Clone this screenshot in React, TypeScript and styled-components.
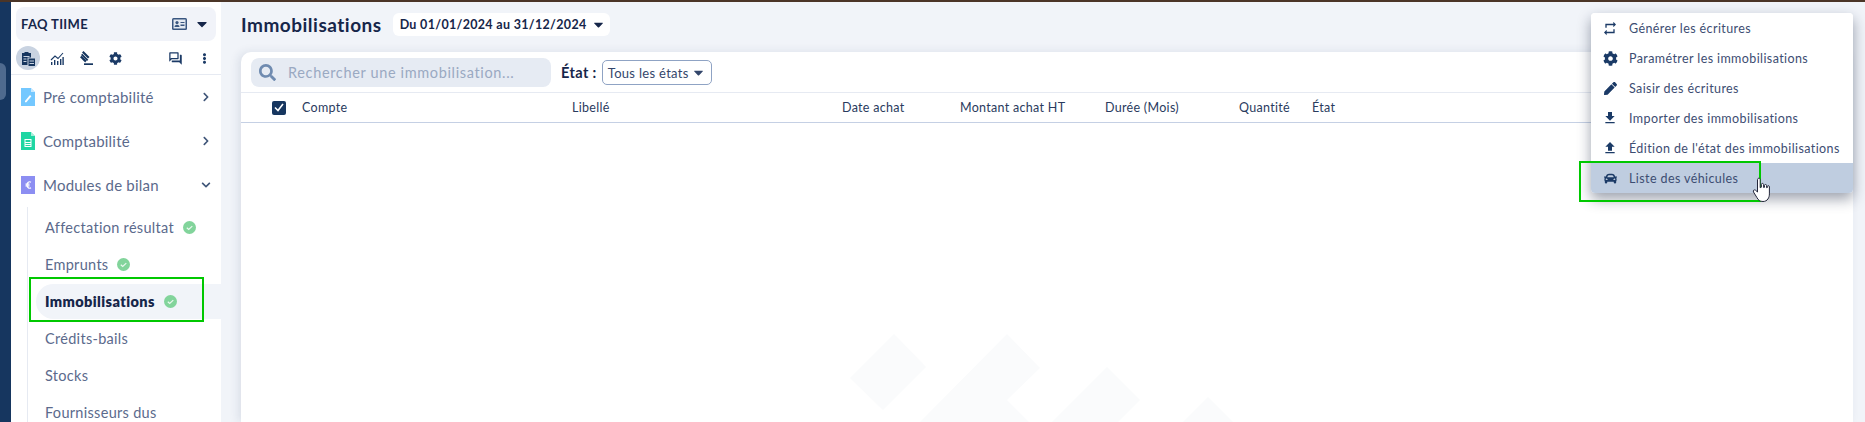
import styled, { createGlobalStyle } from "styled-components";
import { ReactNode } from "react";
import {
  FaCar,
  FaCaretDown,
  FaChevronDown,
  FaChevronRight,
  FaCog,
  FaEllipsisV,
  FaPen,
  FaSearch,
} from "react-icons/fa";
import { MdFileDownload, MdFileUpload, MdOutlineForum, MdRepeat } from "react-icons/md";

const FONT = `"Lato", "Open Sans", "Noto Sans", sans-serif`;

const GlobalStyle = createGlobalStyle`
  html, body { margin: 0; height: 100%; overflow: hidden; background: #f1f4f9; }
  #root { height: 100%; }
  * { box-sizing: border-box; }
  body { font-family: ${FONT}; color: #16264a; }
`;

const Page = styled.div`
  position: relative;
  height: 422px;
  display: flex;
  flex-direction: column;
  overflow: hidden;
`;

const TopBar = styled.div`
  height: 2px;
  flex: none;
  background: #4b3527;
`;

const Body = styled.div`
  flex: 1;
  min-height: 0;
  display: grid;
  grid-template-columns: 11px 210px 1fr;
`;

const Rail = styled.div`
  background: #16365f;
  padding-top: 61px;
`;

const RailTab = styled.div`
  width: 6px;
  height: 37px;
  border-radius: 0 6px 6px 0;
  background: #4f6a8e;
`;

const Sidebar = styled.aside`
  background: #fff;
  overflow: hidden;
  padding-top: 5px;
`;

const Account = styled.div`
  margin: 0 5px;
  height: 34px;
  border-radius: 8px;
  background: #f1f3f9;
  display: flex;
  align-items: center;
  padding: 0 6px 0 5px;
  font-size: 13px;
  font-weight: 700;
  letter-spacing: 0.35px;
  color: #16264a;
`;

const AccountName = styled.span`
  flex: 1;
`;

const CaretBox = styled.span`
  display: inline-flex;
  margin-left: 7px;
  font-size: 16px;
  color: #16264a;
`;

const ToolRow = styled.div`
  height: 29px;
  margin-top: 5px;
  padding: 0 5px;
  display: flex;
  align-items: flex-start;
  border-bottom: 1px solid #e6eaf2;
  color: #1b3a66;
`;

const ToolButton = styled.span<{ $active?: boolean }>`
  width: 24px;
  height: 24px;
  margin-right: 5px;
  border-radius: 50%;
  display: flex;
  align-items: center;
  justify-content: center;
  font-size: 13px;
  background: ${({ $active }) => ($active ? "#c9d3e1" : "transparent")};
  &:last-child {
    margin-right: 0;
  }
`;

const ToolSpacer = styled.span`
  flex: 1;
`;

const NavHead = styled.div`
  height: 44px;
  padding: 0 10px;
  display: flex;
  align-items: center;
  gap: 8px;
  font-size: 15px;
  letter-spacing: 0.22px;
  color: #5b6a8c;
`;

const NavLabel = styled.span`
  flex: 1;
`;

const NavChevron = styled.span`
  display: inline-flex;
  font-size: 10px;
  color: #3f5578;
`;

const SubList = styled.div`
  margin: 0 0 0 16px;
  padding-top: 2px;
  border-left: 1px solid #e6eaf2;
  display: flex;
  flex-direction: column;
`;

const SubItem = styled.div<{ $active?: boolean }>`
  height: ${({ $active }) => ($active ? "35px" : "37px")};
  margin: ${({ $active }) => ($active ? "1px 0 1px 8px" : "0")};
  padding-left: ${({ $active }) => ($active ? "9px" : "17px")};
  display: flex;
  align-items: center;
  gap: 9px;
  font-size: 14.5px;
  letter-spacing: ${({ $active }) => ($active ? "0.4px" : "0.3px")};
  font-weight: ${({ $active }) => ($active ? 800 : 400)};
  color: ${({ $active }) => ($active ? "#16264a" : "#5b6a8c")};
  background: ${({ $active }) => ($active ? "#f1f4f9" : "transparent")};
  border-radius: 18px 0 0 18px;
`;

const Main = styled.main`
  min-width: 0;
  display: flex;
  flex-direction: column;
  padding: 11px 12px 0 20px;
`;

const TitleRow = styled.header`
  height: 39px;
  flex: none;
  display: flex;
  align-items: flex-start;
  gap: 11px;
`;

const Title = styled.h1`
  margin: 0;
  font-size: 19px;
  line-height: 23px;
  font-weight: 700;
  letter-spacing: 0.5px;
  color: #16264a;
`;

const DatePill = styled.div`
  width: 217px;
  height: 23px;
  flex: none;
  border-radius: 6px;
  background: #fff;
  padding: 0 4px 0 7px;
  display: flex;
  align-items: center;
  justify-content: space-between;
  white-space: nowrap;
  font-size: 12.5px;
  font-weight: 700;
  letter-spacing: 0.32px;
  color: #16264a;
`;

const Card = styled.section`
  position: relative;
  flex: 1;
  background: #fff;
  border-radius: 10px 10px 0 0;
  box-shadow: -3px 0 10px rgba(30, 50, 90, 0.1);
  overflow: hidden;
`;

const FilterRow = styled.div`
  height: 41px;
  padding: 6px 0 0 10px;
  display: flex;
  align-items: flex-start;
  border-bottom: 1px solid #e6eaf2;
`;

const SearchBox = styled.div`
  width: 300px;
  height: 29px;
  border-radius: 8px;
  background: #e6ebf3;
  padding: 0 8px;
  display: flex;
  align-items: center;
  gap: 12px;
  font-size: 14.5px;
  letter-spacing: 0.65px;
  color: #9aa9c2;
`;

const SearchIcon = styled.span`
  display: inline-flex;
  font-size: 17px;
  color: #6f8bb0;
`;

const StateLabel = styled.span`
  margin: 0 5px 0 10px;
  line-height: 29px;
  font-size: 14.5px;
  font-weight: 700;
  letter-spacing: 0.4px;
`;

const StateSelect = styled.div`
  width: 110px;
  height: 25px;
  margin-top: 2px;
  border: 1px solid #8fa3c4;
  border-radius: 5px;
  padding: 0 5px;
  display: flex;
  align-items: center;
  justify-content: space-between;
  font-size: 13px;
  letter-spacing: 0.3px;
  color: #33466b;
`;

const TableHead = styled.div`
  height: 30px;
  padding-left: 31px;
  display: grid;
  grid-template-columns: 30px 270px 270px 118px 145px 134px 73px 1fr;
  align-items: center;
  border-bottom: 1px solid #c5d0e4;
  font-size: 12.5px;
  letter-spacing: 0.3px;
  color: #2a3b5e;
`;

const Checkbox = styled.span`
  width: 14px;
  height: 14px;
  border-radius: 2px;
  background: #16365f;
  display: flex;
  align-items: center;
  justify-content: center;
`;

const Watermark = styled.svg`
  position: absolute;
  left: 609px;
  bottom: 0;
  width: 400px;
  height: 88px;
  fill: #fafbfc;
`;

const Menu = styled.div`
  position: absolute;
  left: 1591px;
  top: 13px;
  width: 262px;
  background: #fff;
  border-radius: 4px;
  overflow: hidden;
  box-shadow: 0 6px 14px rgba(20, 30, 60, 0.42);
`;

const MenuItem = styled.div<{ $hover?: boolean }>`
  height: 30px;
  padding-left: 11px;
  display: flex;
  align-items: center;
  gap: 11px;
  font-size: 12.5px;
  letter-spacing: 0.4px;
  color: #3d4d72;
  background: ${({ $hover }) => ($hover ? "#bfcde0" : "#fff")};
`;

const MenuIcon = styled.span`
  width: 16px;
  display: flex;
  justify-content: center;
  color: #1b3a66;
`;

const Highlight = styled.div<{ $x: number; $y: number; $w: number; $h: number }>`
  position: absolute;
  left: ${({ $x }) => $x}px;
  top: ${({ $y }) => $y}px;
  width: ${({ $w }) => $w}px;
  height: ${({ $h }) => $h}px;
  border: 2px solid #00c800;
  pointer-events: none;
`;

const Pointer = styled.svg`
  position: absolute;
  left: 1752px;
  top: 177px;
  width: 20px;
  height: 26px;
`;

const CheckCircle = () => (
  <svg width="13" height="13" viewBox="0 0 13 13">
    <circle cx="6.5" cy="6.5" r="6.5" fill="#82d49b" />
    <path d="M3.8 6.8l1.9 1.7 3.6-3.4" fill="none" stroke="#eaf8ef" strokeWidth="1.2" />
  </svg>
);

const ClipboardIcon = () => (
  <svg width="14" height="15" viewBox="0 0 14 15" fill="#16365f">
    <path d="M1 2h2.5V1h4v1H10v4.5H6.5V14H1z" />
    <path fill="#c9d3e1" d="M2.5 5h6v1h-6zM2.5 7.5h3v1h-3zM2.5 10h3v1h-3z" />
    <path d="M7.5 7.5H14V15H7.5z" />
    <path fill="#c9d3e1" d="M8.5 9.5H13v1H8.5zM8.5 12H13v1H8.5z" />
  </svg>
);

const ChartIcon = () => (
  <svg width="14" height="13" viewBox="0 0 14 13" fill="#1b3a66">
    <path d="M1 8l4-4 3 2.5L13 1" fill="none" stroke="#1b3a66" strokeWidth="1.1" />
    <path d="M1 10h1.4v3H1zM4 8h1.4v5H4zM7 9h1.4v4H7zM10 7h1.4v6H10zM12.4 5h1.4v8h-1.4z" />
  </svg>
);

const GavelIcon = () => (
  <svg width="14" height="14" viewBox="0 0 14 14" fill="#16365f">
    <path d="M3 1.500L4.500 0l6 6L9 7.500zM2 4l1.300-1.300 6 6L8 10z" />
    <path d="M1 6.200l1.600-1.400 5 5-1.400 1.600z" />
    <path d="M1.500 8.700l2-2 1.500 1.500-3.500 2.800z" opacity="0" />
    <path d="M5 12.300h9V14H5z" />
  </svg>
);

const CardIcon = () => (
  <svg width="15" height="12" viewBox="0 0 15 12">
    <rect width="15" height="12" rx="1.5" fill="#3a5680" />
    <rect x="1.5" y="1.5" width="12" height="9" fill="#e4e9f1" />
    <circle cx="5" cy="4.6" r="1.6" fill="#3a5680" />
    <path d="M2.5 9c0-3 5-3 5 0z" fill="#3a5680" />
    <path d="M8.5 4h4v1h-4zM8.5 6.500h4V8h-4z" fill="#3a5680" />
  </svg>
);

const DocIcon = ({ color, children }: { color: string; children: ReactNode }) => (
  <svg width="14" height="18" viewBox="0 0 14 18" style={{ flex: "none" }}>
    <path d="M0 0h10l4 4v14H0z" fill={color} />
    <path d="M10 0l4 4h-4z" fill="#fff" fillOpacity="0.6" />
    {children}
  </svg>
);

const menuItems: { label: string; icon: ReactNode; hover?: boolean }[] = [
  { label: "Générer les écritures", icon: <MdRepeat size={21} /> },
  { label: "Paramétrer les immobilisations", icon: <FaCog size={15} /> },
  { label: "Saisir des écritures", icon: <FaPen size={13} /> },
  { label: "Importer des immobilisations", icon: <MdFileDownload size={22} /> },
  { label: "Édition de l'état des immobilisations", icon: <MdFileUpload size={22} /> },
  { label: "Liste des véhicules", icon: <FaCar size={13} />, hover: true },
];

const subItems = [
  { label: "Affectation résultat", done: true },
  { label: "Emprunts", done: true },
  { label: "Immobilisations", done: true, active: true },
  { label: "Crédits-bails" },
  { label: "Stocks" },
  { label: "Fournisseurs dus" },
];

const columns = ["Compte", "Libellé", "Date achat", "Montant achat HT", "Durée (Mois)", "Quantité", "État"];

const App = () => (
  <Page>
    <GlobalStyle />
    <TopBar />
    <Body>
      <Rail>
        <RailTab />
      </Rail>
      <Sidebar>
        <Account>
          <AccountName>FAQ TIIME</AccountName>
          <CardIcon />
          <CaretBox>
            <FaCaretDown />
          </CaretBox>
        </Account>
        <ToolRow>
          <ToolButton $active>
            <ClipboardIcon />
          </ToolButton>
          <ToolButton>
            <ChartIcon />
          </ToolButton>
          <ToolButton>
            <GavelIcon />
          </ToolButton>
          <ToolButton>
            <FaCog />
          </ToolButton>
          <ToolSpacer />
          <ToolButton>
            <MdOutlineForum size={15} />
          </ToolButton>
          <ToolButton>
            <FaEllipsisV size={11} />
          </ToolButton>
        </ToolRow>
        <NavHead>
          <DocIcon color="#74c8ff">
            <path d="M4 13l5-6 1.4 1.2-5 6H4z" fill="#fff" />
          </DocIcon>
          <NavLabel>Pré comptabilité</NavLabel>
          <NavChevron>
            <FaChevronRight />
          </NavChevron>
        </NavHead>
        <NavHead>
          <DocIcon color="#1fd6a3">
            <rect x="3.5" y="7" width="7" height="8" fill="#fff" />
            <rect x="4.5" y="8" width="5" height="2" fill="#1fd6a3" />
            <path d="M4.5 11h5v1h-5zM4.5 13h5v1h-5z" fill="#1fd6a3" />
          </DocIcon>
          <NavLabel>Comptabilité</NavLabel>
          <NavChevron>
            <FaChevronRight />
          </NavChevron>
        </NavHead>
        <NavHead>
          <svg width="14" height="18" viewBox="0 0 14 18" style={{ flex: "none" }}>
            <rect width="14" height="18" fill="#8c8ef2" />
            <path d="M10 6.200C8 5 6 6.500 6 9s2 4 4 2.800M4.500 8.200h4M4.500 9.800h4" fill="none" stroke="#fff" strokeWidth="1.2" />
          </svg>
          <NavLabel>Modules de bilan</NavLabel>
          <NavChevron>
            <FaChevronDown />
          </NavChevron>
        </NavHead>
        <SubList>
          {subItems.map((item) => (
            <SubItem key={item.label} $active={item.active}>
              {item.label}
              {item.done && <CheckCircle />}
            </SubItem>
          ))}
        </SubList>
      </Sidebar>
      <Main>
        <TitleRow>
          <Title>Immobilisations</Title>
          <DatePill>
            Du 01/01/2024 au 31/12/2024
            <FaCaretDown size={15} />
          </DatePill>
        </TitleRow>
        <Card>
          <FilterRow>
            <SearchBox>
              <SearchIcon>
                <FaSearch />
              </SearchIcon>
              Rechercher une immobilisation...
            </SearchBox>
            <StateLabel>État :</StateLabel>
            <StateSelect>
              Tous les états
              <FaCaretDown size={15} />
            </StateSelect>
          </FilterRow>
          <TableHead>
            <Checkbox>
              <svg width="10" height="9" viewBox="0 0 10 9">
                <path d="M1 4.5l3 3L9 1" fill="none" stroke="#fff" strokeWidth="1.6" />
              </svg>
            </Checkbox>
            {columns.map((column) => (
              <span key={column}>{column}</span>
            ))}
          </TableHead>
          <Watermark viewBox="0 0 400 88">
            <polygon points="44,0 76,33 33,76 0,44" />
            <polygon points="157,0 190,34 157,66 179,88 70,88" />
            <polygon points="257,33 290,66 268,88 202,88" />
            <polygon points="358,63 383,88 333,88" />
          </Watermark>
        </Card>
      </Main>
    </Body>
    <Menu>
      {menuItems.map((item) => (
        <MenuItem key={item.label} $hover={item.hover}>
          <MenuIcon>{item.icon}</MenuIcon>
          {item.label}
        </MenuItem>
      ))}
    </Menu>
    <Highlight $x={29} $y={277} $w={175} $h={45} />
    <Highlight $x={1579} $y={161} $w={182} $h={41} />
    <Pointer viewBox="0 0 20 26">
      <path
        d="M6 1.500c1-.8 2.200 0 2.200 1.200v8l1.200-.5V7.500c0-1.500 2-1.500 2.200 0v3l.9-.2V8.500c.1-1.400 2-1.400 2.100 0v2.200l.8-.2v-1c.3-1.300 2-1 2 .4v7c0 3.500-1.800 7.600-6.400 7.600-3.300 0-4.800-1.500-6-3.800L1.500 15c-.8-1.400.7-2.800 2-1.800l2 1.800V2.700z"
        fill="#fff"
        stroke="#23263a"
        strokeWidth="1"
      />
    </Pointer>
  </Page>
);

export default App;
